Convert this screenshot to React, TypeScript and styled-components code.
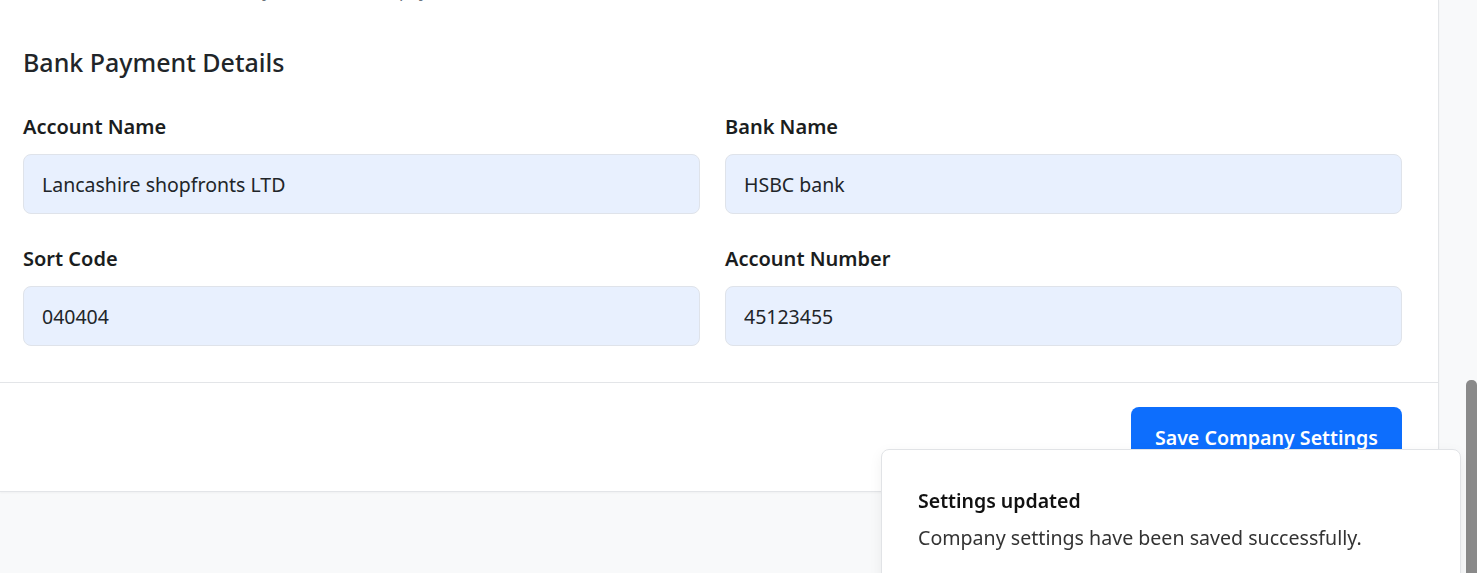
import React from "react";
import styled, { createGlobalStyle } from "styled-components";

const GlobalStyle = createGlobalStyle`
  html, body {
    margin: 0;
    padding: 0;
    background: #f8f9fa;
    overflow: hidden;
    font-family: "Noto Sans", "Open Sans", Arial, sans-serif;
    color: #212529;
  }
  * { box-sizing: border-box; }
`;

const Page = styled.div`
  display: flex;
  height: 573px;
  width: 1477px;
  overflow: hidden;
`;

const Main = styled.div`
  flex: 0 0 1439px;
  display: flex;
  flex-direction: column;
`;

const Card = styled.div`
  background: #ffffff;
  border-right: 1px solid #e3e5e8;
  border-bottom: 1px solid #e3e5e8;
  box-shadow: 0 1px 2px rgba(0, 0, 0, 0.04);
  overflow: hidden;
`;

const CardBody = styled.div`
  padding: 0 36px 36px 23px;
`;

const Helper = styled.p`
  margin: -22px 0 0 0;
  height: 26px;
  font-size: 17px;
  line-height: 26px;
  color: #6c757d;
`;

const SectionTitle = styled.h5`
  margin: 43px 0 35px 0;
  font-size: 25px;
  font-weight: 500;
  line-height: 30px;
  color: #212529;
`;

const FieldGrid = styled.div`
  display: grid;
  grid-template-columns: 1fr 1fr;
  column-gap: 25px;
  row-gap: 30px;
`;

const Field = styled.div`
  display: flex;
  flex-direction: column;
`;

const Label = styled.label`
  font-size: 20px;
  font-weight: 600;
  line-height: 30px;
  margin-bottom: 12px;
  color: #1a1d20;
`;

const Input = styled.input`
  height: 60px;
  width: 100%;
  padding: 0 18px;
  font-family: inherit;
  font-size: 19.5px;
  color: #212529;
  background: #e8f0fe;
  border: 1px solid #dfe3ea;
  border-radius: 8px;
  outline: none;
`;

const Footer = styled.div`
  display: flex;
  justify-content: flex-end;
  padding: 24px 36px 24px 23px;
  border-top: 1px solid #e3e5e8;
`;

const PrimaryButton = styled.button`
  height: 60px;
  padding: 0 24px;
  font-family: inherit;
  font-size: 19.6px;
  font-weight: 600;
  color: #ffffff;
  background: #0d6efd;
  border: none;
  border-radius: 8px;
  cursor: pointer;
`;

const Gutter = styled.div`
  flex: 0 0 27px;
`;

const ScrollTrack = styled.div`
  flex: 0 0 11px;
  display: flex;
  flex-direction: column;
`;

const ScrollThumb = styled.div`
  margin-top: 380px;
  flex: 1;
  background: #8a8a8a;
  border-radius: 5px 5px 0 0;
`;

const Toast = styled.div`
  position: fixed;
  left: 881px;
  top: 449px;
  width: 580px;
  height: 160px;
  background: #ffffff;
  border: 1px solid #e1e3e6;
  border-radius: 8px;
  box-shadow: 0 4px 14px rgba(0, 0, 0, 0.06);
  padding: 36px 36px;
`;

const ToastTitle = styled.div`
  font-size: 19.5px;
  font-weight: 600;
  line-height: 30px;
  color: #111;
`;

const ToastText = styled.div`
  margin-top: 7px;
  font-size: 19.6px;
  line-height: 30px;
  color: #333;
`;

const fields = [
  { label: "Account Name", value: "Lancashire shopfronts LTD" },
  { label: "Bank Name", value: "HSBC bank" },
  { label: "Sort Code", value: "040404" },
  { label: "Account Number", value: "45123455" },
];

export default function App() {
  return (
    <>
      <GlobalStyle />
      <Page>
        <Main>
          <Card>
            <CardBody>
              <Helper>Bank details will be shown on your invoices for payment.</Helper>
              <SectionTitle>Bank Payment Details</SectionTitle>
              <FieldGrid>
                {fields.map((f) => (
                  <Field key={f.label}>
                    <Label>{f.label}</Label>
                    <Input defaultValue={f.value} />
                  </Field>
                ))}
              </FieldGrid>
            </CardBody>
            <Footer>
              <PrimaryButton>Save Company Settings</PrimaryButton>
            </Footer>
          </Card>
        </Main>
        <Gutter />
        <ScrollTrack>
          <ScrollThumb />
        </ScrollTrack>
      </Page>
      <Toast>
        <ToastTitle>Settings updated</ToastTitle>
        <ToastText>Company settings have been saved successfully.</ToastText>
      </Toast>
    </>
  );
}
